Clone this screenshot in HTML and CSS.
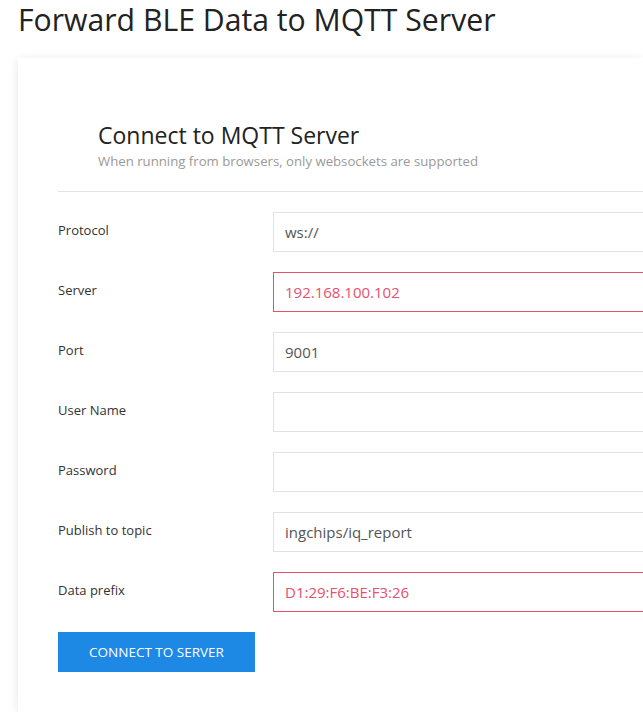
FILE: index.html
```html
<!DOCTYPE html>
<html>
<head>
<meta charset="utf-8">
<link rel="stylesheet" href="styles.css">
</head>
<body>
<h1 class="title">Forward BLE Data to MQTT Server</h1>
<div class="card">
  <div class="card-head">
    <h2 class="card-title">Connect to MQTT Server</h2>
    <div class="card-sub">When running from browsers, only websockets are supported</div>
  </div>
  <hr class="divider">
  <form class="form">
    <label class="label">Protocol</label>
    <div class="field">ws://</div>
    <label class="label">Server</label>
    <div class="field invalid">192.168.100.102</div>
    <label class="label">Port</label>
    <div class="field">9001</div>
    <label class="label">User Name</label>
    <div class="field"></div>
    <label class="label">Password</label>
    <div class="field"></div>
    <label class="label">Publish to topic</label>
    <div class="field">ingchips/iq_report</div>
    <label class="label">Data prefix</label>
    <div class="field invalid">D1:29:F6:BE:F3:26</div>
  </form>
  <button class="btn" type="button">CONNECT TO SERVER</button>
</div>
</body>
</html>
```
FILE: styles.css
```css
html, body {
  margin: 0;
  padding: 0;
  overflow: hidden;
  background: #fff;
  font-family: "Open Sans", "Noto Sans", sans-serif;
  color: #333;
}
body {
  padding: 0 0 0 18px;
}
.title {
  margin: 0;
  padding-top: 1px;
  font-size: 30.2px;
  font-weight: 400;
  line-height: 38px;
  color: #222;
  height: 57px;
}
.card {
  width: 625px;
  box-sizing: border-box;
  padding: 40px 0 40px 40px;
  background: #fff;
  box-shadow: 0 2px 10px rgba(0,0,0,0.1);
}
.card-head {
  padding: 22px 0 0 40px;
  height: 50px;
}
.card-title {
  margin: 0;
  font-size: 23px;
  font-weight: 400;
  line-height: 30px;
  color: #222;
}
.card-sub {
  margin-top: 2px;
  font-size: 13.2px;
  line-height: 18px;
  color: #999;
}
.divider {
  border: 0;
  border-top: 1px solid #e4e4e4;
  margin: 21px 0 20px 0;
}
.form {
  display: grid;
  grid-template-columns: 215px 1fr;
  row-gap: 20px;
}
.label {
  font-size: 13px;
  color: #333;
  line-height: 18px;
  padding-top: 9px;
}
.field {
  height: 40px;
  box-sizing: border-box;
  border: 1px solid #e2e2e2;
  border-right: 0;
  padding: 0 11px;
  font-size: 15px;
  line-height: 38px;
  color: #555;
}
.field.invalid {
  border-color: #e8506e;
  color: #e8506e;
}
.btn {
  display: block;
  margin-top: 20px;
  width: 197px;
  height: 40px;
  border: 0;
  background: #1e88e5;
  color: #fff;
  font-family: inherit;
  font-size: 13.5px;
  padding: 0;
}
```
